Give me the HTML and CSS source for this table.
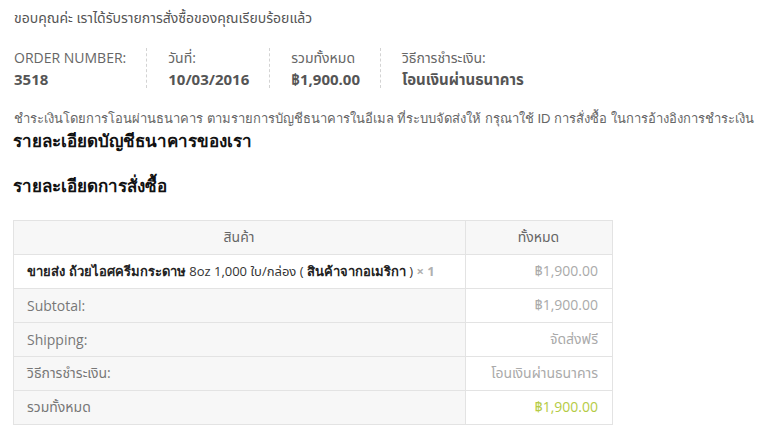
FILE: index.html
```html
<!DOCTYPE html>
<html lang="th">
<head>
<meta charset="utf-8">
<link rel="stylesheet" href="styles.css">
</head>
<body>
<div class="page">
  <p class="thanks">ขอบคุณค่ะ เราได้รับรายการสั่งซื้อของคุณเรียบร้อยแล้ว</p>
  <ul class="overview">
    <li class="ov-item"><span class="ov-label">ORDER NUMBER:</span><strong class="ov-value">3518</strong></li>
    <li class="ov-item"><span class="ov-label">วันที่:</span><strong class="ov-value">10/03/2016</strong></li>
    <li class="ov-item"><span class="ov-label">รวมทั้งหมด</span><strong class="ov-value">฿1,900.00</strong></li>
    <li class="ov-item ov-last"><span class="ov-label">วิธีการชำระเงิน:</span><strong class="ov-value">โอนเงินผ่านธนาคาร</strong></li>
  </ul>
  <p class="bacs">ชำระเงินโดยการโอนผ่านธนาคาร ตามรายการบัญชีธนาคารในอีเมล ที่ระบบจัดส่งให้ กรุณาใช้ ID การสั่งซื้อ ในการอ้างอิงการชำระเงิน</p>
  <h2 class="heading">รายละเอียดบัญชีธนาคารของเรา</h2>
  <h2 class="heading heading-order">รายละเอียดการสั่งซื้อ</h2>
  <table class="order-table">
    <thead>
      <tr><th class="th-name">สินค้า</th><th class="th-total">ทั้งหมด</th></tr>
    </thead>
    <tbody>
      <tr><td class="td-name"><span class="prod">ขายส่ง ถ้วยไอศครีมกระดาษ </span><span class="prod-lite">8oz 1,000 ใบ/กล่อง ( </span><span class="prod">สินค้าจากอเมริกา</span><span class="prod-lite"> )</span> <strong class="qty">× 1</strong></td><td class="td-total">฿1,900.00</td></tr>
    </tbody>
    <tfoot>
      <tr><th class="tf-label">Subtotal:</th><td class="td-total">฿1,900.00</td></tr>
      <tr><th class="tf-label">Shipping:</th><td class="td-total">จัดส่งฟรี</td></tr>
      <tr><th class="tf-label">วิธีการชำระเงิน:</th><td class="td-total">โอนเงินผ่านธนาคาร</td></tr>
      <tr><th class="tf-label">รวมทั้งหมด</th><td class="td-total td-green">฿1,900.00</td></tr>
    </tfoot>
  </table>
</div>
</body>
</html>
```

FILE: styles.css
```css
html, body {
  margin: 0;
  padding: 0;
  background: #ffffff;
}
.page {
  padding: 7px 13px 0 13px;
  font-family: "Open Sans", "Noto Sans Thai", "Noto Sans", sans-serif;
  color: #555555;
  font-size: 14px;
}
.thanks {
  margin: 0;
  line-height: 22px;
  padding-left: 1px;
  color: #555;
}
.overview {
  list-style: none;
  margin: 19px 0 0 0;
  padding: 0 0 0 1px;
  display: flex;
  height: 40px;
}
.ov-item {
  display: flex;
  flex-direction: column;
  padding-right: 20px;
  margin-right: 21px;
  border-right: 1px dashed #d3d3d3;
}
.ov-last {
  border-right: none;
}
.ov-label {
  font-size: 14px;
  line-height: 20px;
  color: #666;
  text-transform: uppercase;
}
.ov-value {
  font-size: 15px;
  line-height: 20px;
  margin-top: 1px;
  font-weight: 700;
  color: #555;
}
.bacs {
  margin: 21px 0 0 0;
  padding-left: 1px;
  font-family: "Liberation Sans", Arial, sans-serif;
  font-size: 13px;
  line-height: 20px;
  color: #666;
}
.heading {
  margin: 1px 0 0 0;
  font-size: 17px;
  line-height: 24px;
  font-weight: 700;
  color: #111;
  font-family: "Liberation Sans", Arial, sans-serif;
}
.heading-order {
  margin-top: 21px;
}
.order-table {
  margin-top: 21px;
  width: 600px;
  border-collapse: collapse;
  border: 1px solid #e3e3e3;
  font-size: 14px;
}
.order-table th,
.order-table td {
  border: 1px solid #e3e3e3;
  height: 33px;
  padding: 0 14px 0 13px;
  font-weight: 400;
}
.order-table thead th {
  background: #f7f7f7;
  color: #666;
  text-align: center;
}
.th-name {
  width: 424px;
}
.td-name {
  background: #ffffff;
  color: #333;
  text-align: left;
  white-space: nowrap;
  font-size: 13px;
}
.prod {
  font-weight: 700;
  color: #222;
  font-family: "Liberation Sans", Arial, sans-serif;
}
.prod-lite {
  color: #333;
}
.qty {
  color: #b0b0b0;
  font-weight: 700;
}
.tf-label {
  background: #f7f7f7;
  text-align: left;
  color: #777;
}
.td-total {
  text-align: right;
  color: #aaaaaa;
  background: #ffffff;
}
.td-green {
  color: #b5cb45;
}
```
